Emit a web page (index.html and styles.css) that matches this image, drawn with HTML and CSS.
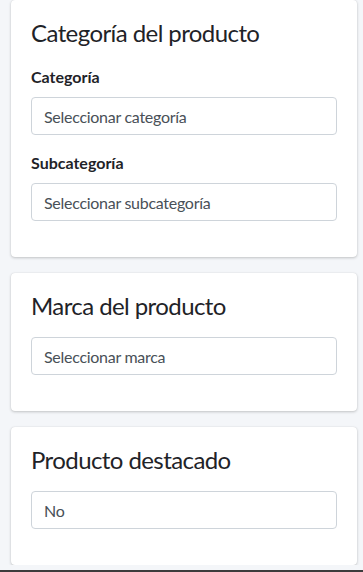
FILE: index.html
```html
<!DOCTYPE html>
<html lang="es">
<head>
<meta charset="utf-8">
<title>Producto</title>
<link rel="stylesheet" href="styles.css">
</head>
<body>
<div class="page">
  <section class="card">
    <h3 class="card-title">Categoría del producto</h3>
    <div class="form-group">
      <label class="label">Categoría</label>
      <div class="form-control">Seleccionar categoría</div>
    </div>
    <div class="form-group">
      <label class="label">Subcategoría</label>
      <div class="form-control">Seleccionar subcategoría</div>
    </div>
  </section>
  <section class="card">
    <h3 class="card-title">Marca del producto</h3>
    <div class="form-group">
      <div class="form-control">Seleccionar marca</div>
    </div>
  </section>
  <section class="card">
    <h3 class="card-title">Producto destacado</h3>
    <div class="form-group">
      <div class="form-control">No</div>
    </div>
  </section>
</div>
<div class="frame-edge"></div>
</body>
</html>
```
FILE: styles.css
```css
* { box-sizing: border-box; }
html, body { margin: 0; padding: 0; }
body {
  background: #f4f6f9;
  font-family: Lato, "Noto Sans", sans-serif;
  color: #212529;
  overflow: hidden;
}
.page {
  display: flex;
  flex-direction: column;
  gap: 16px;
  padding: 0 6px 0 11px;
}
.card {
  display: flex;
  flex-direction: column;
  background: #fff;
  border-radius: 4px;
  box-shadow: 0 0 1px rgba(0,0,0,.125), 0 1px 3px rgba(0,0,0,.2);
  padding: 20px;
}
.card-title {
  margin: 0 0 18px;
  font-size: 24px;
  line-height: 26px;
  font-weight: 400;
  letter-spacing: -0.58px;
  color: #1f2328;
}
.form-group {
  display: flex;
  flex-direction: column;
  margin-bottom: 16px;
}
.label {
  display: block;
  font-size: 16px;
  line-height: 22px;
  font-weight: 700;
  margin: 1px 0 9px;
  color: #1f2328;
}
.card-title + .form-group .label { margin-top: 2px; }
.form-control {
  height: 38px;
  border: 1px solid #ced4da;
  border-radius: 4px;
  padding: 0 12px;
  display: flex;
  align-items: center;
  font-size: 16px;
  letter-spacing: -0.28px;
  color: #495057;
  background: #fff;
}
.frame-edge {
  position: fixed;
  left: 0; right: 0; bottom: 0;
  height: 2px;
  background: #3c3c3c;
}
```
